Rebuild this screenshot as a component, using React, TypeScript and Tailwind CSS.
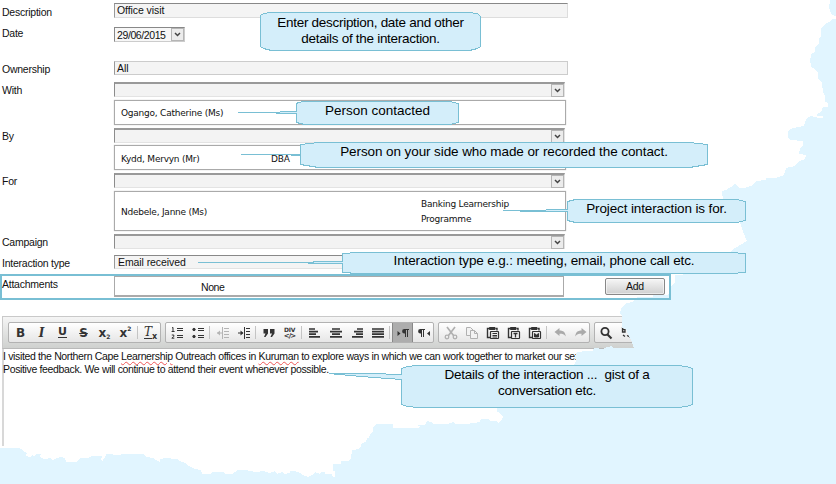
import type { ReactNode } from "react";

const base = "font-['Liberation_Sans',Arial,sans-serif] text-[10.5px] leading-[13px] text-[#111]";
const ui = `${base} tracking-[-0.08px]`;
const tight = `${base} tracking-[-0.24px]`;
const small = "font-['DejaVu_Sans',Verdana,sans-serif] text-[9px] leading-[15px] tracking-[-0.23px] text-[#111]";

function Arrow() {
  return (
    <span className="flex h-[13px] w-[13px] shrink-0 items-center justify-center border border-[#b5b5b5] bg-[#ececec]">
      <svg width="7" height="5" viewBox="0 0 7 5" fill="none" stroke="#444" strokeWidth="1.5">
        <path d="M1 1l2.5 2.5L6 1" />
      </svg>
    </span>
  );
}

function Row({ label, className, labelClass = "", children }: { label: string; className: string; labelClass?: string; children: ReactNode }) {
  return (
    <div className={`flex items-start ${className}`}>
      <div className={`w-[112px] shrink-0 whitespace-nowrap ${tight} ${labelClass}`}>{label}</div>
      {children}
    </div>
  );
}

function Combo() {
  return (
    <div className="flex h-[15px] w-[451px] justify-end border border-t-2 border-[#e3e3e3] border-t-[#999] border-l-[#8c8c8c] bg-[#f3f3f3]">
      <Arrow />
    </div>
  );
}

function ListBox({ className, children }: { className: string; children: ReactNode }) {
  return <div className={`ml-28 flex w-[452px] border border-[#aaa] bg-white shadow-[0_0_1px_#bbb] ${small} ${className}`}>{children}</div>;
}

function Icon({ children, className = "text-[#333]" }: { children: ReactNode; className?: string }) {
  return (
    <span className={`flex h-[19px] w-[21px] shrink-0 items-center justify-center ${className}`}>
      <svg width="16" height="16" viewBox="0 0 16 16" fill="none" stroke="currentColor">
        {children}
      </svg>
    </span>
  );
}

function Glyph({ children, className = "" }: { children: ReactNode; className?: string }) {
  return (
    <span className={`flex h-[19px] w-[21px] shrink-0 items-center justify-center font-['DejaVu_Sans',sans-serif] leading-none text-[#333] ${className}`}>
      {children}
    </span>
  );
}

const Sep = () => <span className="mt-[3px] mr-[2px] ml-px h-[13px] w-px shrink-0 bg-[#c4c4c4]" />;

function Group({ className, children }: { className: string; children: ReactNode }) {
  return <div className={`flex h-[21px] shrink-0 overflow-hidden rounded-[2px] border border-[#b2b2b2] bg-linear-to-b from-white to-[#e6e6e6] ${className}`}>{children}</div>;
}

function Align({ d }: { d: string }) {
  return (
    <Icon>
      <path strokeWidth="1.7" d={d} />
    </Icon>
  );
}

function Paste({ children }: { children: ReactNode }) {
  return (
    <Icon>
      <path d="M5.5 12.5h-3v-9h2M10.5 3.5h1.500v2" strokeWidth="1.4" />
      <path d="M4.5 4.500V2.500h5.500v2z" fill="currentColor" />
      <rect x="5.5" y="6.5" width="8" height="7" rx=".5" fill="#eee" strokeWidth="1.200" />
      {children}
    </Icon>
  );
}

function Toolbar() {
  return (
    <div className="flex h-[33px] items-start border border-[#c9c9c9] border-b-[#b9b9b9] bg-linear-to-b from-[#f5f5f5] to-[#cfd1cf] pt-[5px] pl-[5px]">
      <Group className="w-[153px] pl-px">
        <Glyph className="text-[12px] font-bold">B</Glyph>
        <Glyph className="font-['DejaVu_Serif',serif] text-[12px] font-bold italic">I</Glyph>
        <Glyph className="text-[11px] font-bold"><span className="border-b border-[#333] leading-[10px]">U</span></Glyph>
        <Glyph className="text-[12px] font-bold line-through">S</Glyph>
        <Glyph className="text-[12px] font-bold">x<span className="mt-2 text-[6px]">2</span></Glyph>
        <Glyph className="text-[12px] font-bold">x<span className="mb-2 text-[6px]">2</span></Glyph>
        <Sep />
        <Glyph className="text-[12px]"><span className="border-b border-[#333] font-['DejaVu_Serif',serif] leading-[11px] italic">T</span><span className="mt-2 text-[8px] font-bold">x</span></Glyph>
      </Group>
      <Group className="ml-[4px] w-[269px]">
        <Icon>
          <path d="M8 3.5h6M8 5.5h6M8 10.5h6M8 12.5h6M3 3l1-.6V6.5M2.6 6.5h3M2.8 10h2v1.5L2.8 13.2h2.5" />
        </Icon>
        <Icon>
          <path d="M8 3.5h6M8 5.5h6M8 10.5h6M8 12.5h6" />
          <circle cx="4" cy="4.5" r="1.2" fill="currentColor" />
          <circle cx="4" cy="11.5" r="1.2" fill="currentColor" />
        </Icon>
        <Sep />
        <Icon className="text-[#b4b4b4]">
          <path d="M7.5 2v12M9 3.5h5M9 6.5h5M9 9.5h5M9 12.5h5M2 8h5" />
          <path d="M5 5.500L2 8l3 2.500z" fill="currentColor" stroke="none" />
        </Icon>
        <Icon>
          <path d="M8.5 2v12M10 3.5h4M10 6.5h4M10 9.5h4M10 12.5h4M2 8h5" />
          <path d="M4.500 5.500L7.500 8l-3 2.500z" fill="currentColor" stroke="none" />
        </Icon>
        <Sep />
        <Icon>
          <path d="M2.500 4h4.500v4.500L4.500 12H3L4.500 8.500h-2zM9 4h4.500v4.500L11 12H9.500L11 8.500H9z" fill="currentColor" stroke="none" />
        </Icon>
        <Glyph className="flex-col font-bold">
          <span className="text-[6px] leading-[6px] tracking-[-0.3px]">DIV</span>
          <span className="text-[7px] leading-[6px] tracking-[-1px]">{"</>"}</span>
        </Glyph>
        <Sep />
        <Align d="M2 4h6M2 6.600h9M2 9.200h7M2 11.800h11" />
        <Align d="M4 4h8M2 6.600h12M4 9.200h8M2 11.800h12" />
        <Align d="M8 4h6M5 6.600h9M7 9.200h7M3 11.800h11" />
        <Align d="M2 4h12M2 6.600h12M2 9.200h12M2 11.800h12" />
        <Sep />
        <span className="-mt-px flex h-[21px] w-[21px] shrink-0 items-center justify-center border border-[#888] bg-[#adadad]">
          <svg width="16" height="16" viewBox="0 0 16 16" fill="#333" stroke="none" className="shrink-0">
            <path d="M2.500 6l3 2.500-3 2.500zM14 4H9.300a2.200 2.200 0 0 0 0 4.400h.7V12h1V5h1v7h1V5h1z" />
          </svg>
        </span>
        <Icon>
          <path fill="currentColor" stroke="none" d="M14 6l-3 2.500 3 2.500zM9 4H4.300a2.200 2.200 0 0 0 0 4.400H5V12h1V5h1v7h1V5h1z" />
        </Icon>
      </Group>
      <Group className="ml-[4px] w-[152px] pl-px">
        <Icon className="text-[#b0b0b0]">
          <path strokeWidth="1.700" d="M4 2l6.500 8.500M12 2L5.500 10.500" />
          <circle cx="4" cy="12" r="1.800" strokeWidth="1.300" />
          <circle cx="12" cy="12" r="1.800" strokeWidth="1.300" />
        </Icon>
        <Icon className="text-[#b0b0b0]">
          <path d="M2.500 2.500h4l3 3v5h-7z" fill="#f2f2f2" />
          <path d="M6.500 5.500h4l3 3v5h-7z" fill="#f2f2f2" />
          <path d="M10.500 5.500v3h3" />
        </Icon>
        <Paste><path d="M7.500 8.500h4.500M7.500 10.500h4.500M7.500 12h4.500" /></Paste>
        <Paste><path d="M7.500 8.500h4M9.500 8.500V12.500" strokeWidth="1.300" /></Paste>
        <Paste><path d="M7.500 12V8.500l2 1.500 2-1.500V12z" fill="currentColor" /></Paste>
        <Sep />
        <Icon className="text-[#aaa]">
          <path d="M2.500 7L7.500 3v2.500c4 0 6 2 6.200 6C12 9 10 8.700 7.500 8.800V11z" fill="currentColor" stroke="none" />
        </Icon>
        <Icon className="text-[#aaa]">
          <path d="M13.500 7L8.500 3v2.500c-4 0-6 2-6.200 6C4 9 6 8.700 8.500 8.800V11z" fill="currentColor" stroke="none" />
        </Icon>
      </Group>
      <Group className="ml-[4px] w-[60px]">
        <Icon>
          <circle cx="7" cy="6.500" r="3.600" strokeWidth="1.800" />
          <path d="M9.500 9.500l4 4" strokeWidth="2.200" />
        </Icon>
        <Icon>
          <path strokeWidth="1.300" d="M3.500 2v5h2.500V4.500H3.500M4 10l2 1.500M8 10.500l3 1.500M11 11.500h3" />
        </Icon>
      </Group>
    </div>
  );
}

function Callout({ box, shape, width, height, text, children }: { box: string; shape: string; width: number; height: number; text: string; children: ReactNode }) {
  return (
    <div className={`absolute ${box}`}>
      <svg className="absolute inset-0 overflow-visible" width={width} height={height} shapeRendering="crispEdges" fill="#d4eefa" stroke="#79bfd4">
        <polygon points={shape} />
      </svg>
      <div className={`relative text-center font-['Liberation_Sans',Arial,sans-serif] text-[13.5px] leading-4 whitespace-pre text-black ${text}`}>{children}</div>
    </div>
  );
}

const tear =
  "830,0 829,8 832,15 836,16 836,19 833,19 829,22 824,25 821,29 821,36 819,38 819,43 815,48 815,52 811,54 811,58 810,58 811,67 815,69 818,73 818,79 822,83 823,92 825,96 825,102 828,103 828,107 823,107 821,112 817,114 817,116 823,116 823,118 819,118 811,116 806,119 804,126 793,128 788,131 788,138 791,140 803,141 803,145 800,148 799,154 806,155 805,159 799,161 795,166 786,168 784,175 776,178 766,178 766,180 756,181 751,186 744,188 739,188 737,185 734,184 731,187 726,190 722,191 723,201 738,205 740,222 743,232 747,241 742,244 737,247 732,250 720,272 675,275 675,282 671,287 668,295 653,295 653,297 637,297 633,302 627,303 623,306 621,308 620,314 622,316 622,328 626,329 628,334 632,342 634,348 613,348 612,346 604,348 603,349 594,348 593,351 586,351 577,352 575,356 576,361 574,365 574,408 497,408 497,412 500,413 503,417 502,419 500,421 498,423 496,421 490,421 489,419 481,419 480,422 467,424 455,424 453,421 451,423 447,424 433,424 431,422 427,421 425,425 415,425 420,426 418,428 393,428 393,424 377,424 373,427 373,432 370,434 369,438 367,438 366,442 362,443 360,448 355,450 352,450 351,458 348,461 341,461 341,464 333,464 333,471 335,471 335,477 333,477 332,474 325,474 325,472 321,472 320,474 315,472 312,475 308,477 302,475 300,473 295,471 290,471 290,473 284,474 282,472 277,474 275,471 270,473 263,471 256,472 250,471 245,470 238,470 232,474 226,474 223,472 213,472 210,474 202,474 201,470 195,469 189,466 185,463 179,461 177,459 165,458 160,459 160,462 156,460 153,458 146,457 143,454 123,454 119,455 106,454 105,458 103,459 103,462 101,460 102,456 92,456 88,458 81,458 76,462 66,462 65,458 60,457 57,458 53,460 50,458 45,459 41,458 40,455 42,454 36,454 34,457 32,455 30,457 26,456 27,453 24,452 22,449 18,448 0,448 0,484 836,484 836,0";

export default function App() {
  return (
    <main className="relative h-[484px] w-[836px] overflow-hidden bg-white">
      <form className="pt-[3px] pl-[2px]">
        <Row label="Description" className="h-6" labelClass="pt-[3px]">
          <div className={`h-[15px] w-[454px] border border-[#ddd] border-t-[#888] border-l-[#999] bg-[#f4f4f4] pl-[2px] ${ui}`}>Office visit</div>
        </Row>
        <Row label="Date" className="h-[34px]">
          <div className={`flex h-[15px] w-[71px] justify-between border border-[#ccc] border-t-[#888] border-l-[#888] bg-[#f7f7f7] pl-[2px] ${base} tracking-[-0.4px]`}>
            <span className="pt-px">29/06/2015</span>
            <Arrow />
          </div>
        </Row>
        <Row label="Ownership" className="h-[21px]" labelClass="pt-[2px]">
          <div className={`h-[14px] w-[454px] border border-[#ccc] border-l-[#999] bg-[#f4f4f4] pl-[2px] ${ui}`}>All</div>
        </Row>
        <Row label="With" className="h-[18px]" labelClass="pt-[2px]"><Combo /></Row>
        <ListBox className="h-[25px] pt-[5px] pl-[6px]">Ogango, Catherine (Ms)</ListBox>
        <Row label="By" className="mt-[3px] h-[17px]" labelClass="pt-[2px]"><Combo /></Row>
        <ListBox className="h-[25px] pt-[6px] pl-[6px]">
          <span className="w-[150px]">Kydd, Mervyn (Mr)</span>DBA
        </ListBox>
        <Row label="For" className="mt-[3px] h-[18px]" labelClass="pt-[2px]"><Combo /></Row>
        <ListBox className="h-10 items-center pt-[2px] pl-[6px]">
          <span className="w-[300px]">Ndebele, Janne (Ms)</span>
          <span>Banking Learnership<br />Programme</span>
        </ListBox>
        <Row label="Campaign" className="mt-[3px] h-[21px]" labelClass="pt-[2px]"><Combo /></Row>
        <Row label="Interaction type" className="h-[19px]" labelClass="pt-[2px]">
          <div className={`h-[14px] w-[454px] border border-[#e3e3e3] border-t-[#888] border-l-[#999] bg-[#f4f4f4] pl-[3px] ${ui}`}>Email received</div>
        </Row>
      </form>
      <section className="flex h-[26px] w-[671px] items-start border-2 border-[#79bfd4] bg-white">
        <div className={`w-[112px] shrink-0 pt-[2px] ${tight}`}>Attachments</div>
        <div className={`h-[21px] w-[450px] border border-b-2 border-[#aaa] pt-[4px] pl-[86px] ${base} tracking-[-0.45px]`}>None</div>
        <button type="button" className={`mt-[2px] ml-[41px] h-[17px] w-[60px] rounded-[2px] border border-[#888] bg-linear-to-b from-[#f6f6f6] to-[#d0d0d0] shadow-[inset_0_0_0_1px_#fff8] ${base} tracking-[-0.3px]`}>Add</button>
      </section>
      <section className="mt-4 ml-[2px] h-[130px] w-[660px] border-l-2 border-[#d8d8d8]">
        <div className="-ml-[2px]"><Toolbar /></div>
        <p className={`-ml-px pt-px whitespace-nowrap ${base} tracking-[-0.35px]`}>
          I visited the Northern Cape <span className="underline decoration-[#e55] decoration-wavy decoration-[0.6px] underline-offset-1">Learnership</span> Outreach offices in{" "}
          <span className="underline decoration-[#e55] decoration-wavy decoration-[0.6px] underline-offset-1">Kuruman</span> to explore ways in which we can work together to market our services
          <br />
          Positive feedback. We will continue to attend their event whenever possible.
        </p>
      </section>

      {/* torn paper edge, with the attachments frame kept whole above it */}
      <svg className="absolute inset-0" width="836" height="484" shapeRendering="crispEdges">
        <polygon points={tear} fill="#e1f5ff" />
        <path d="M600 299H670V274" fill="none" stroke="#79bfd4" strokeWidth="2" />
      </svg>

      <Callout box="left-[260px] top-[12px] w-[221px]" width={221} height={39} text="pt-[3px] tracking-[-0.29px]" shape="0.5,3.500 3.500,1.500 11.500,0.500 208.500,0.500 217.500,1.500 220.500,4.500 220.500,34.500 217.500,36.500 209.500,38.500 11.500,38.500 3.500,36.500 0.500,34.500">
        {"Enter description, date and other\ndetails of the interaction."}
      </Callout>
      <Callout box="left-[296px] top-[101px] w-[163px]" width={163} height={24} text="pt-[2px]" shape="0.5,3 2,1.500 8.500,0.500 153.500,0.500 162.500,2.500 162.500,21.500 153.500,23.500 8.500,23.500 0.500,21.500 0.500,12.500 -20,12.500 -20,11.500 -58,11.500 -20,11.500 -11,10.500 0.500,10.500">
        Person contacted
      </Callout>
      <Callout box="left-[300px] top-[142px] w-[408px]" width={408} height={26} text="pt-[2px] tracking-[-0.09px]" shape="0.5,2.500 18.500,0.500 389.500,0.500 407.500,2.500 407.500,22.500 389.500,25.500 18.500,25.500 0.500,22.500 0.500,13.500 -20,12.500 -59,12.500 0.500,12.500">
        Person on your side who made or recorded the contact.
      </Callout>
      <Callout box="left-[567px] top-[199px] w-[179px]" width={179} height={24} text="pt-[2px] tracking-[-0.13px]" shape="0.5,2.500 8.500,0.500 169.500,0.500 178.500,2.500 178.500,21.500 169.500,23.500 8.500,23.500 0.500,21.500 0.500,12.500 -30,12.500 -64,11.500 -30,11.500 -12,10.500 0.500,10.500">
        Project interaction is for.
      </Callout>
      <Callout box="left-[342px] top-[252px] w-[404px]" width={404} height={22} text="pt-[1px] tracking-[-0.14px]" shape="0.5,1.500 16.500,0.500 388.500,0.500 403.500,1.500 403.500,20.500 388.500,21.500 16.500,21.500 0.500,20.500 0.500,11.500 -29,11.500 -40,10.500 -144,10.500 -29,10.500 -29,9.500 0.500,9.500">
        Interaction type e.g.: meeting, email, phone call etc.
      </Callout>
      <Callout box="left-[401px] top-[365px] w-[292px]" width={292} height={43} text="pt-[2px] tracking-[-0.23px]" shape="0.5,3.500 6.500,1.500 16.500,0.500 276.500,0.500 285.500,1.500 291.500,3.500 291.500,39.500 285.500,41.500 276.500,42.500 16.500,42.500 6.500,41.500 0.500,39.500 0.500,14.500 -40,11.500 -72,8.500 -31,8.500 0.500,9.500">
        {"Details of the interaction ...  gist of a\nconversation etc."}
      </Callout>
    </main>
  );
}
